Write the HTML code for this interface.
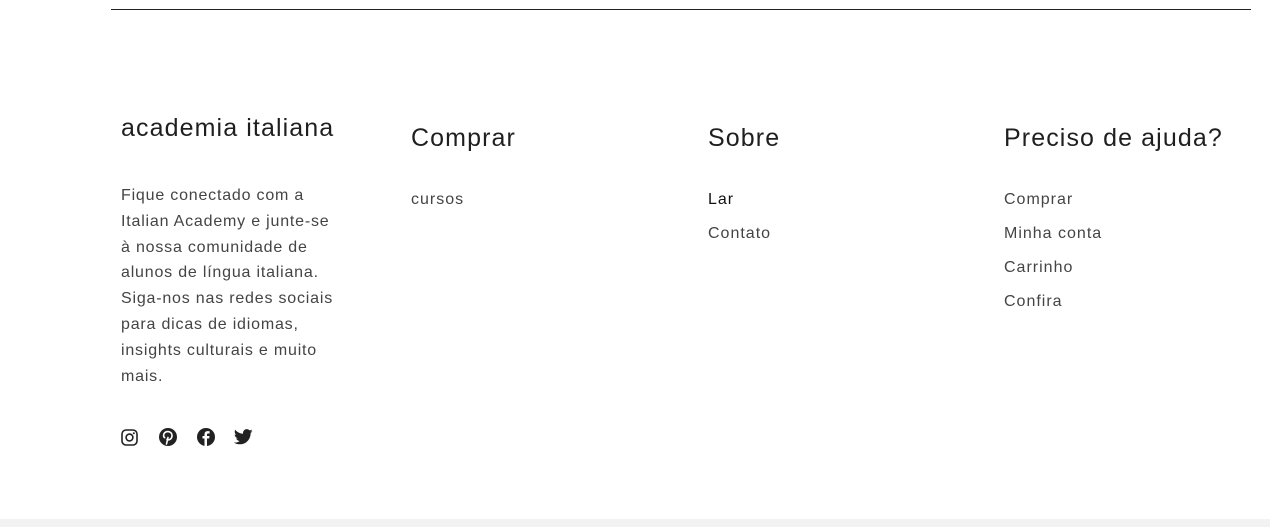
<!DOCTYPE html>
<html><head><meta charset="utf-8"><style>
*{margin:0;padding:0;box-sizing:border-box}
body{width:1270px;height:527px;background:#fff;font-family:"Liberation Sans",sans-serif;position:relative;overflow:hidden;color:#222}
.line{position:absolute;left:111px;top:9px;width:1140px;height:1px;background:#222}
.foot{position:absolute;left:0;top:519px;width:1270px;height:8px;background:#f2f2f2}
h2{position:absolute;font-weight:400;font-size:25px;letter-spacing:1.1px;color:#1f1f1f;white-space:nowrap}
.p{position:absolute;left:121px;top:183px;white-space:nowrap;font-size:16px;letter-spacing:0.8px;line-height:25.8px;color:#444}
.l{position:absolute;font-size:16px;letter-spacing:1px;color:#444;white-space:nowrap}
svg{position:absolute}
</style></head><body>
<div class="line"></div>
<h2 style="left:121px;top:114px">academia italiana</h2>
<div class="p">Fique conectado com a<br>Italian Academy e junte-se<br>à nossa comunidade de<br>alunos de língua italiana.<br>Siga-nos nas redes sociais<br>para dicas de idiomas,<br>insights culturais e muito<br>mais.</div>
<h2 style="left:411px;top:124px">Comprar</h2>
<div class="l" style="left:411px;top:191px">cursos</div>
<h2 style="left:708px;top:124px">Sobre</h2>
<div class="l" style="left:708px;top:191px;color:#111">Lar</div>
<div class="l" style="left:708px;top:225px">Contato</div>
<h2 style="left:1004px;top:124px">Preciso de ajuda?</h2>
<div class="l" style="left:1004px;top:191px">Comprar</div>
<div class="l" style="left:1004px;top:225px">Minha conta</div>
<div class="l" style="left:1004px;top:259px">Carrinho</div>
<div class="l" style="left:1004px;top:293px">Confira</div>
<svg style="left:121px;top:429px" width="17" height="17" viewBox="0 0 17 17"><rect x="1" y="1" width="15" height="15" rx="4" fill="none" stroke="#222" stroke-width="1.6"/><circle cx="8.5" cy="8.5" r="3.4" fill="none" stroke="#222" stroke-width="1.6"/><circle cx="12.8" cy="4.2" r="1" fill="#222"/></svg>
<svg style="left:159px;top:428px" width="18" height="18" viewBox="0 0 18 18"><circle cx="9" cy="9" r="9" fill="#222"/><path d="M7.5 16 L9 9.5 M8 11.5 C10 12.5 13 11 13 7.8 C13 5 11 3.6 8.8 3.6 C6 3.6 4.6 5.6 4.6 7.4 C4.6 8.6 5.1 9.4 5.7 9.7" fill="none" stroke="#fff" stroke-width="1.6" stroke-linecap="round"/></svg>
<svg style="left:197px;top:428px" width="18" height="18" viewBox="0 0 18 18"><circle cx="9" cy="9" r="9" fill="#222"/><path d="M10 18 V10.5 H12.2 L12.5 8 H10 V6.6 C10 5.9 10.3 5.5 11.2 5.5 H12.6 V3.3 C12.2 3.2 11.4 3.1 10.6 3.1 C8.7 3.1 7.5 4.2 7.5 6.3 V8 H5.5 V10.5 H7.5 V18 Z" fill="#fff"/></svg>
<svg style="left:234px;top:429px" width="19" height="16" viewBox="0 0 24 20"><path d="M23.6 2.4c-.9.4-1.8.6-2.8.8 1-.6 1.8-1.6 2.1-2.7-.9.6-2 1-3.1 1.2C18.9.7 17.6 0 16.2 0c-2.7 0-4.8 2.2-4.8 4.8 0 .4 0 .8.1 1.1C7.4 5.7 3.9 3.8 1.6.9c-.4.7-.7 1.6-.7 2.4 0 1.700.9 3.2 2.2 4-.8 0-1.5-.2-2.2-.6v.1c0 2.3 1.7 4.3 3.9 4.700-.4.1-.8.2-1.3.2-.3 0-.6 0-.9-.1.6 1.9 2.4 3.3 4.5 3.4-1.7 1.3-3.7 2.1-6 2.1-.4 0-.8 0-1.2-.1 2.1 1.4 4.7 2.2 7.4 2.2 8.9 0 13.7-7.4 13.7-13.7v-.6c.9-.7 1.7-1.5 2.4-2.5z" fill="#222"/></svg>
<div class="foot"></div>
</body></html>
